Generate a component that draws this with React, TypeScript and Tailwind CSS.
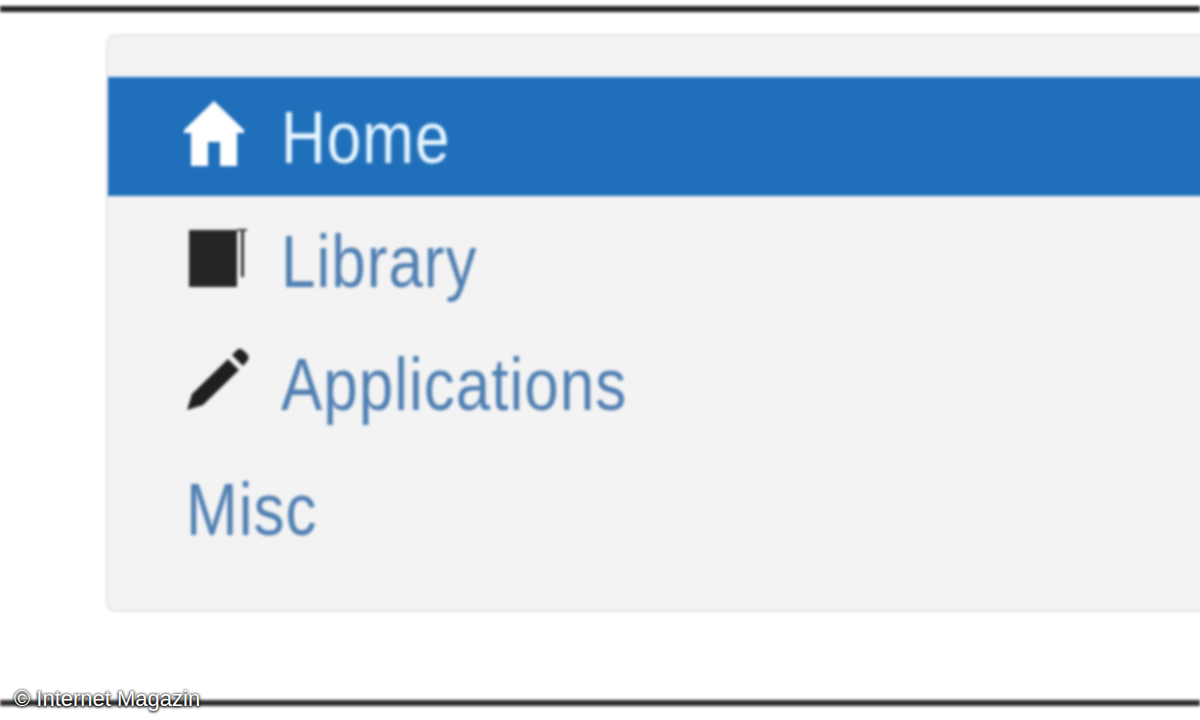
import { ReactNode } from "react";

const HomeIcon = () => (
  <svg width="62" height="66" viewBox="0 0 62 66" className="-ml-[3px] mb-[8px] block">
    <path d="M31 0 L61 29 L61 32 L54 32 L54 65 L37 65 L37 41 L25 41 L25 65 L8 65 L8 32 L1 32 L1 29 Z" fill="#ffffff" />
  </svg>
);

const BookIcon = () => (
  <svg width="62" height="62" viewBox="0 0 62 62" className="mb-[8px] ml-[1px] block">
    <path d="M2 3 H50 V60 H2 Z" fill="#252525" />
    <path d="M50 2 H60 V4 H57 V50 H54 V4 H50 Z" fill="#333333" />
  </svg>
);

const PencilIcon = () => (
  <svg width="64" height="64" viewBox="0 0 64 64" className="mb-[10px] block">
    <path d="M1 62 L6 46 L42 11 L53 22 L17 57 Z" fill="#1f1f1f" />
    <path d="M46 7 L52 1 Q55 0 58 3 L62 7 Q63 10 62 12 L57 18 Z" fill="#1f1f1f" />
  </svg>
);

type RowProps = {
  label: string,
  icon?: ReactNode,
  active?: boolean,
  className?: string,
}

const NavRow = ({ label, icon, active, className }: RowProps) => (
  <div className={`flex items-center pl-[78px] ${active ? "bg-[#1f6fbb] text-[#e4f5ff]" : "text-[#4f7fb2]"} ${className ?? ""}`}>
    {icon && <div className="w-[95px] shrink-0">{icon}</div>}
    <span className="inline-block origin-center scale-y-[1.2] text-[62px] leading-none tracking-[1px]">{label}</span>
  </div>
);

export default function App() {
  return (
    <div className="relative flex h-[720px] w-[1200px] flex-col overflow-hidden bg-white font-['Liberation_Sans',Arial,sans-serif]">
      <div className="flex flex-col blur-[1.6px]">
        <div className="mt-[6px] h-[6px] bg-[#222222]" />
        <div className="mt-[22px] ml-[106px] mr-[-40px] h-[578px] rounded-[10px] border-2 border-[#e4e4e4] bg-[#f3f3f3] pt-[41px]">
          <NavRow label="Home" active icon={<HomeIcon />} className="h-[119px] pt-[3px]" />
          <NavRow label="Library" icon={<BookIcon />} className="mt-[4px] h-[123px]" />
          <NavRow label="Applications" icon={<PencilIcon />} className="h-[122px] pt-[2px]" />
          <NavRow label="Misc" className="h-[124px] pt-[6px]" />
        </div>
        <div className="mt-[88px] h-[6px] bg-[#2b2b2b]" />
      </div>
      <div className="absolute bottom-[10px] left-[14px] text-[22px] leading-none text-white [text-shadow:0_0_3px_#000,0_1px_3px_#000]">
        © Internet Magazin
      </div>
    </div>
  );
}
